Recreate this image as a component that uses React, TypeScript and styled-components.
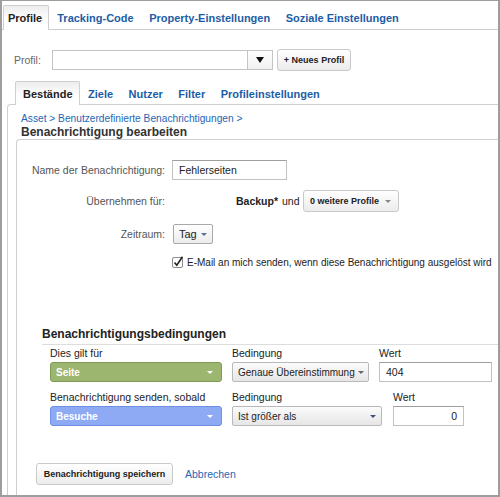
import React from 'react';
import styled, { createGlobalStyle, css } from 'styled-components';

const GlobalStyle = createGlobalStyle`
  html, body {
    margin: 0;
    padding: 0;
    background: #ffffff;
  }
  body {
    font-family: "Liberation Sans", Arial, Helvetica, sans-serif;
    color: #333333;
  }
  * {
    box-sizing: border-box;
  }
`;

const Frame = styled.div`
  width: 500px;
  height: 497px;
  border: 2px solid #9d9d9d;
  border-top-width: 1px;
  background: #ffffff;
  overflow: hidden;
  display: flex;
  flex-direction: column;
`;

const TabBar = styled.div<{ $sub?: boolean }>`
  display: flex;
  align-items: flex-end;
  padding-left: ${({ $sub }) => ($sub ? '8px' : '1px')};
  margin-top: ${({ $sub }) => ($sub ? '0' : '4px')};
  ${({ $sub }) =>
    !$sub &&
    css`
      border-bottom: 1px solid #cfcfcf;
    `}
  position: relative;
  z-index: 1;
`;

const Tab = styled.div<{ $active?: boolean; $first?: boolean; $sub?: boolean }>`
  height: ${({ $sub }) => ($sub ? '24px' : '25px')};
  margin-bottom: -1px;
  padding: 0 7px;
  padding-left: ${({ $first, $sub }) => ($first && !$sub ? '4px' : '7px')};
  padding-right: ${({ $first, $sub }) => ($first && !$sub ? '6px' : '6.5px')};
  display: flex;
  align-items: center;
  font-size: 11px;
  font-weight: bold;
  color: ${({ $active }) => ($active ? '#222222' : '#1d5da5')};
  border: 1px solid transparent;
  border-bottom: none;
  white-space: nowrap;
  ${({ $active }) =>
    $active &&
    css`
      border-color: #cfcfcf;
      border-radius: 2px 2px 0 0;
      background: linear-gradient(#ededed, #ffffff 60%);
    `}
`;

const ProfileRow = styled.div`
  display: flex;
  align-items: center;
  height: 22px;
  margin-top: 19px;
  padding-left: 12px;
`;

const ProfileLabel = styled.span`
  font-size: 10.5px;
  color: #666666;
  width: 38px;
`;

const ProfileSelect = styled.div`
  width: 221px;
  height: 20px;
  border: 1px solid #c4c4c4;
  display: flex;
  justify-content: flex-end;
  background: #ffffff;
`;

const SelectButton = styled.div`
  width: 25px;
  border-left: 1px solid #c4c4c4;
  background: linear-gradient(#ffffff, #f1f1f1);
  display: flex;
  align-items: center;
  justify-content: center;
`;

const BlackArrow = styled.span`
  width: 0;
  height: 0;
  border-left: 4px solid transparent;
  border-right: 4px solid transparent;
  border-top: 6px solid #111111;
`;

const Caret = styled.span<{ $color?: string }>`
  display: inline-block;
  flex-shrink: 0;
  width: 0;
  height: 0;
  border-left: 3px solid transparent;
  border-right: 3px solid transparent;
  border-top: 3px solid ${({ $color }) => $color || '#777777'};
`;

const Button = styled.div<{ $width?: number; $height?: number }>`
  display: inline-flex;
  align-items: center;
  justify-content: center;
  gap: 6px;
  width: ${({ $width }) => ($width ? `${$width}px` : 'auto')};
  height: ${({ $height }) => $height || 22}px;
  padding: 0 6px;
  border: 1px solid #c9c9c9;
  border-radius: 3px;
  background: linear-gradient(#ffffff, #ececec);
  font-size: 9px;
  font-weight: bold;
  color: #222222;
  white-space: nowrap;
`;

const SubSection = styled.div`
  flex: 1;
  margin-top: 10px;
  margin-left: 5px;
  display: flex;
  flex-direction: column;
`;

const Panel = styled.div`
  flex: 1;
  width: 600px;
  border-top: 1px solid #cfcfcf;
  border-left: 1px solid #cfcfcf;
  border-top-left-radius: 4px;
  padding-top: 7px;
  display: flex;
  flex-direction: column;
`;

const Breadcrumb = styled.div`
  margin-left: 13px;
  font-size: 10.2px;
  line-height: 13px;
  color: #2566b4;
`;

const Heading = styled.div`
  margin-left: 13px;
  font-size: 12px;
  line-height: 14px;
  font-weight: bold;
  color: #333333;
`;

const FormBox = styled.div`
  flex: 1;
  margin-left: 8px;
  border-top: 1px solid #cfcfcf;
  border-left: 1px solid #cfcfcf;
  border-top-left-radius: 4px;
  padding-top: 20px;
`;

const FieldRow = styled.div<{ $gapTop?: number; $height: number }>`
  display: grid;
  grid-template-columns: 148px auto;
  column-gap: 7px;
  align-items: center;
  height: ${({ $height }) => $height}px;
  margin-top: ${({ $gapTop }) => $gapTop || 0}px;
`;

const FieldLabel = styled.span`
  text-align: right;
  font-size: 10.5px;
  color: #555555;
  white-space: nowrap;
`;

const TextInput = styled.div<{ $width: number; $height?: number; $right?: boolean }>`
  width: ${({ $width }) => $width}px;
  height: ${({ $height }) => $height || 20}px;
  border: 1px solid #c2c2c2;
  border-top-color: #9f9f9f;
  background: #ffffff;
  display: flex;
  align-items: center;
  justify-content: ${({ $right }) => ($right ? 'flex-end' : 'flex-start')};
  padding: 0 6px;
  font-size: 10.5px;
  color: #222222;
`;

const ApplyGroup = styled.div`
  display: flex;
  align-items: center;
  margin-left: 64px;
  font-size: 10.5px;
  color: #222222;
  white-space: nowrap;
`;

const Strong = styled.b`
  font-weight: bold;
  margin-right: 4px;
`;

const SmallButton = styled(Button)`
  font-size: 11px;
  font-weight: normal;
  gap: 4px;
  border-color: #a9a9a9;
  border-radius: 2px;
  padding: 0 5px;
`;

const CheckRow = styled.div`
  display: flex;
  align-items: center;
  gap: 3px;
  font-size: 10px;
  color: #222222;
  white-space: nowrap;
`;

const Conditions = styled.div`
  margin-top: 58px;
  margin-left: 25px;
`;

const SectionTitle = styled.div`
  font-size: 12px;
  line-height: 14px;
  font-weight: bold;
  color: #222222;
  padding-bottom: 3px;
  border-bottom: 1px solid #dddddd;
`;

const CondRow = styled.div<{ $gapTop: number }>`
  display: flex;
  padding-left: 8px;
  margin-top: ${({ $gapTop }) => $gapTop}px;
`;

const CondField = styled.div<{ $width: number; $space?: number }>`
  width: ${({ $width }) => $width}px;
  margin-right: ${({ $space }) => $space ?? 10}px;
  display: flex;
  flex-direction: column;
  gap: 2px;
`;

const CondLabel = styled.span`
  font-size: 10.5px;
  line-height: 13px;
  color: #222222;
  white-space: nowrap;
`;

const ColorSelect = styled.div<{ $tone: 'green' | 'blue' }>`
  height: 20px;
  border-radius: 3px;
  border: 1px solid ${({ $tone }) => ($tone === 'green' ? '#7f9b55' : '#6e8fe2')};
  background: ${({ $tone }) => ($tone === 'green' ? '#9cb56f' : '#8eaaf4')};
  color: #ffffff;
  font-size: 10px;
  font-weight: bold;
  display: flex;
  align-items: center;
  justify-content: space-between;
  padding: 0 8px 0 5px;
`;

const GraySelect = styled.div`
  height: 20px;
  border: 1px solid #b9b9b9;
  border-radius: 2px;
  background: linear-gradient(#fbfbfb, #e6e6e6);
  font-size: 10px;
  color: #222222;
  display: flex;
  align-items: center;
  justify-content: space-between;
  gap: 3px;
  padding: 0 5px 0 5px;
  white-space: nowrap;
`;

const Footer = styled.div`
  display: flex;
  align-items: center;
  gap: 12px;
  margin-top: 37px;
  margin-left: 19px;
`;

const Link = styled.span`
  font-size: 10.5px;
  color: #2566b4;
`;

const CheckBox = () => (
  <svg width="12" height="12" viewBox="0 0 12 12">
    <rect x="0.5" y="1.5" width="10" height="10" rx="1.5" fill="#ffffff" stroke="#8a8a8a" />
    <path d="M2.5 6.5 L4.8 9.2 L10.5 0.8" fill="none" stroke="#222222" strokeWidth="1.6" />
  </svg>
);

export default function App() {
  return (
    <>
      <GlobalStyle />
      <Frame>
        <TabBar>
          <Tab $active $first>Profile</Tab>
          <Tab>Tracking-Code</Tab>
          <Tab>Property-Einstellungen</Tab>
          <Tab>Soziale Einstellungen</Tab>
        </TabBar>

        <ProfileRow>
          <ProfileLabel>Profil:</ProfileLabel>
          <ProfileSelect>
            <SelectButton>
              <BlackArrow />
            </SelectButton>
          </ProfileSelect>
          <Button $width={74} style={{ marginLeft: 4 }}>+ Neues Profil</Button>
        </ProfileRow>

        <SubSection>
          <TabBar $sub>
            <Tab $active $sub>Bestände</Tab>
            <Tab $sub>Ziele</Tab>
            <Tab $sub>Nutzer</Tab>
            <Tab $sub>Filter</Tab>
            <Tab $sub>Profileinstellungen</Tab>
          </TabBar>
          <Panel>
            <Breadcrumb>Asset &gt; Benutzerdefinierte Benachrichtigungen &gt;</Breadcrumb>
            <Heading>Benachrichtigung bearbeiten</Heading>
            <FormBox>
              <FieldRow $height={20}>
                <FieldLabel>Name der Benachrichtigung:</FieldLabel>
                <TextInput $width={115}>Fehlerseiten</TextInput>
              </FieldRow>
              <FieldRow $height={22} $gapTop={10}>
                <FieldLabel>Übernehmen für:</FieldLabel>
                <ApplyGroup>
                  <Strong>Backup*</Strong>
                  und
                  <Button $width={96} style={{ marginLeft: 3 }}>
                    0 weitere Profile <Caret $color="#888888" />
                  </Button>
                </ApplyGroup>
              </FieldRow>
              <FieldRow $height={20} $gapTop={12}>
                <FieldLabel>Zeitraum:</FieldLabel>
                <div>
                  <SmallButton $height={20} style={{ marginLeft: 1 }}>
                    Tag <Caret $color="#5a6f96" />
                  </SmallButton>
                </div>
              </FieldRow>
              <FieldRow $height={14} $gapTop={11}>
                <span />
                <CheckRow>
                  <CheckBox />
                  E-Mail an mich senden, wenn diese Benachrichtigung ausgelöst wird
                </CheckRow>
              </FieldRow>

              <Conditions>
                <SectionTitle>Benachrichtigungsbedingungen</SectionTitle>
                <CondRow $gapTop={2}>
                  <CondField $width={172}>
                    <CondLabel>Dies gilt für</CondLabel>
                    <ColorSelect $tone="green">
                      Seite <Caret $color="#ffffff" />
                    </ColorSelect>
                  </CondField>
                  <CondField $width={137}>
                    <CondLabel>Bedingung</CondLabel>
                    <GraySelect>
                      Genaue Übereinstimmung <Caret $color="#666666" />
                    </GraySelect>
                  </CondField>
                  <CondField $width={113}>
                    <CondLabel>Wert</CondLabel>
                    <TextInput $width={113}>404</TextInput>
                  </CondField>
                </CondRow>
                <CondRow $gapTop={9}>
                  <CondField $width={172}>
                    <CondLabel>Benachrichtigung senden, sobald</CondLabel>
                    <ColorSelect $tone="blue">
                      Besuche <Caret $color="#ffffff" />
                    </ColorSelect>
                  </CondField>
                  <CondField $width={150} $space={11}>
                    <CondLabel>Bedingung</CondLabel>
                    <GraySelect>
                      Ist größer als <Caret $color="#3b4f80" />
                    </GraySelect>
                  </CondField>
                  <CondField $width={71}>
                    <CondLabel>Wert</CondLabel>
                    <TextInput $width={71} $right>0</TextInput>
                  </CondField>
                </CondRow>
              </Conditions>

              <Footer>
                <Button $width={137}>Benachrichtigung speichern</Button>
                <Link>Abbrechen</Link>
              </Footer>
            </FormBox>
          </Panel>
        </SubSection>
      </Frame>
    </>
  );
}
